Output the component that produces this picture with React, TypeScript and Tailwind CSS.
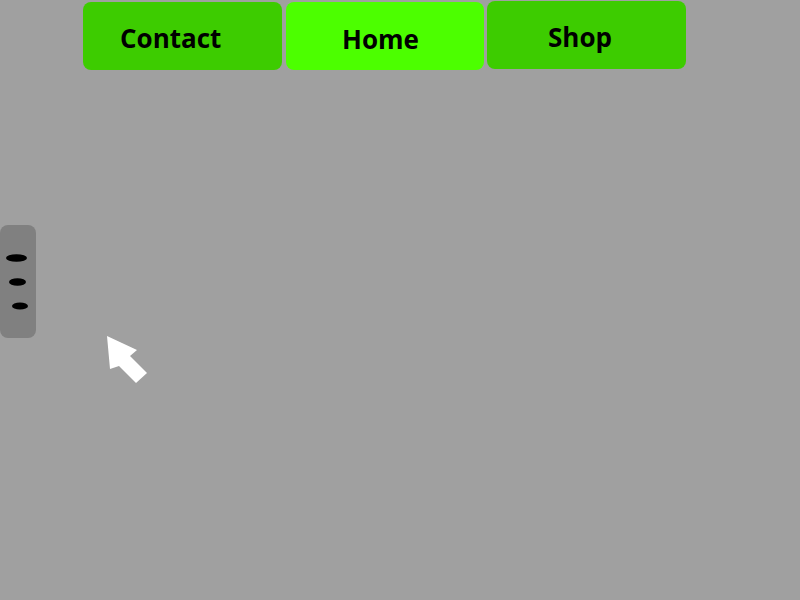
import { FC } from 'react';

const tabs = [
  { label: 'Contact', box: 'w-[199px] bg-[#3dcc00] mt-[2px] pl-[37px] pt-[19px]' },
  { label: 'Home', box: 'w-[198px] ml-[4px] bg-[#4cff00] mt-[2px] pl-[56px] pt-[20px]' },
  { label: 'Shop', box: 'w-[199px] ml-[3px] bg-[#3dcc00] mt-[1px] pl-[61px] pt-[19px]' },
];

const App: FC = () => {
  return (
    <div
      className="relative w-[800px] h-[600px] bg-[#a0a0a0] overflow-hidden"
      style={{ fontFamily: '"Open Sans", "Noto Sans", sans-serif' }}
    >
      <div className="flex items-start pl-[83px]">
        {tabs.map((t) => (
          <div
            key={t.label}
            className={`h-[68px] rounded-[8px] text-[26px] leading-[34px] font-bold text-black ${t.box}`}
          >
            {t.label}
          </div>
        ))}
      </div>

      <div className="mt-[155px] w-[36px] h-[113px] bg-[#808080] rounded-[8px] relative">
        <svg width="36" height="113" viewBox="0 0 36 113" className="absolute left-0 top-0">
          <ellipse cx="16.5" cy="33" rx="10.5" ry="3.8" fill="#000" />
          <ellipse cx="17.5" cy="57" rx="8.5" ry="3.8" fill="#000" />
          <ellipse cx="20" cy="81" rx="8" ry="3.6" fill="#000" />
        </svg>
      </div>

      <svg
        width="60"
        height="60"
        viewBox="100 330 60 60"
        className="absolute left-[100px] top-[330px]"
      >
        <polygon
          points="107,336 137,350 130,356 147,373 136,383 119,366 110,369"
          fill="#fff"
        />
      </svg>
    </div>
  );
};

export default App;
